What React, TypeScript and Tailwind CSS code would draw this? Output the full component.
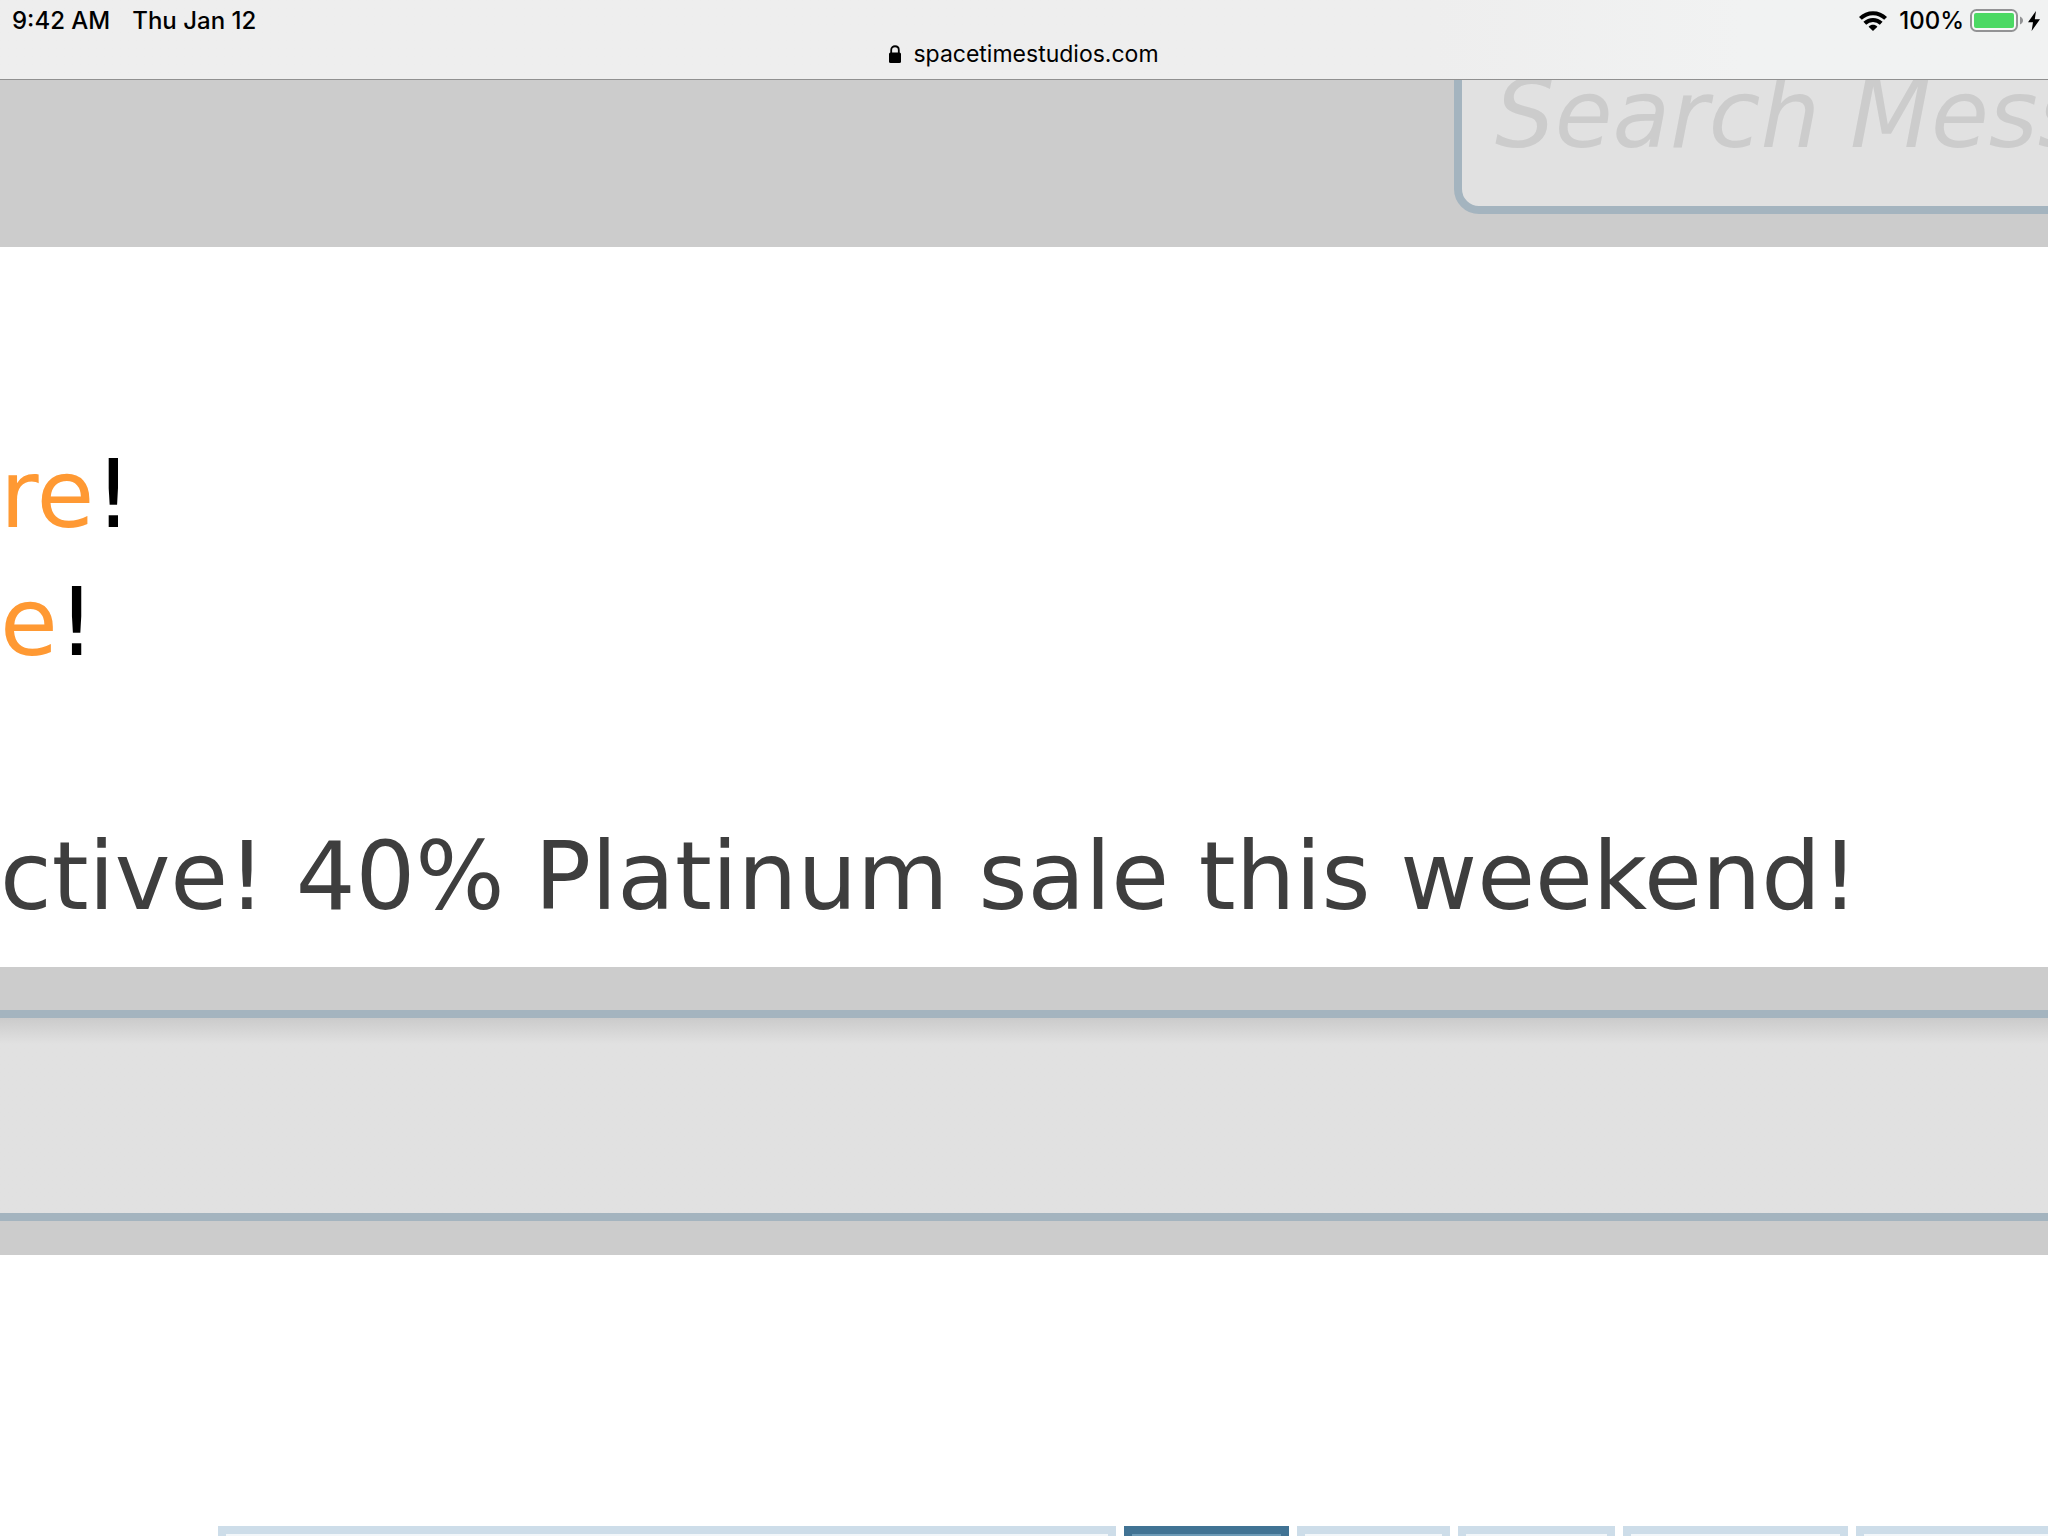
const cells = [
  { label: 'Page list', width: 'w-[898px]', active: false },
  { label: 'Page 1', width: 'w-[165px]', active: true },
  { label: 'Page 2', width: 'w-[153px]', active: false },
  { label: 'Page 3', width: 'w-[157px]', active: false },
  { label: 'Page 11', width: 'w-[225px]', active: false },
  { label: 'Next page', width: 'w-[225px]', active: false },
]

function WifiIcon() {
  return (
    <svg className="w-7 h-5" viewBox="0 0 28 20" fill="none" stroke="#000" strokeWidth={4}>
      <path d="M1.4 7.4C8.5 0.4 19.5 0.4 26.6 7.4" />
      <path d="M5.8 12.2C10.4 7.8 17.6 7.8 22.2 12.2" />
      <path d="M14 20L9.6 15.8C12.2 13.2 15.8 13.2 18.4 15.8Z" fill="#000" stroke="none" />
    </svg>
  )
}

function BatteryIcon() {
  return (
    <svg className="w-[54px] h-6" viewBox="0 0 54 24">
      <rect x="1" y="1" width="46" height="21" rx="5.5" fill="#f8f8f8" stroke="#939395" strokeWidth="2" />
      <rect x="4" y="4" width="40" height="15" rx="2" fill="#4cd964" />
      <path d="M50 7.5C54 9 54 14 50 15.5Z" fill="#939395" />
    </svg>
  )
}

function StatusBar() {
  return (
    <header className="relative z-10 h-20 border-b border-[#909090] bg-linear-to-r from-[#eeeeee] from-70% to-[#f1f2f2] to-85% font-['Inter',sans-serif] text-black">
      <div className="flex h-[42px] items-center justify-between pl-3 pr-2 text-2xl">
        <div className="flex gap-[22px] font-medium">
          <span>9:42 AM</span>
          <span>Thu Jan 12</span>
        </div>
        <div className="flex items-center">
          <WifiIcon />
          <span className="ml-3 mr-1.5 font-medium">100%</span>
          <BatteryIcon />
          <svg className="w-3 h-5 ml-1" viewBox="0 0 12 20">
            <path d="M8 0L0 11.2H5L3.6 20L12 8.2H6.8Z" fill="#000" />
          </svg>
        </div>
      </div>
      <div className="flex h-6 items-center justify-center gap-3 text-[23px]">
        <svg className="w-3 h-[18px]" viewBox="0 0 12 18">
          <path d="M2.2 9V5C2.2 0 9.8 0 9.8 5V9" fill="none" stroke="#000" strokeWidth="1.8" />
          <rect y="7.5" width="12" height="10.5" rx="1.5" fill="#000" />
        </svg>
        <span>spacetimestudios.com</span>
      </div>
    </header>
  )
}

export default function App() {
  return (
    <div className="h-screen overflow-hidden bg-white font-['DejaVu_Sans',sans-serif] text-[94px] leading-[128px]">
      <StatusBar />

      <form className="-mt-20 flex h-[247px] justify-end overflow-hidden bg-[#cccccc] pt-[2px]">
        <input
          type="text"
          aria-label="Search messages"
          placeholder="Search Messages"
          className="-mr-[200px] h-[212px] w-[794px] shrink-0 rounded-[25px] border-8 border-[#a4b4bf] bg-[#e1e1e1] pl-[33px] pt-3 italic outline-none placeholder:text-[#cccccc]"
        />
      </form>

      <main>
        <section className="h-[720px] pt-[184px]">
          <p className="text-black"><a href="#" className="text-[#ff9933]">re</a>!</p>
          <p className="text-black"><a href="#" className="text-[#ff9933]">e</a>!</p>
          <p className="mt-[126px] whitespace-nowrap text-[#3e3e3e]">
            ctive! 40% Platinum sale this weekend!
          </p>
        </section>

        <div className="h-72 bg-[#cccccc] pt-[43px]">
          <div className="h-[211px] border-y-8 border-[#a4b4bf] bg-linear-to-b from-[#cbcbcb] to-[#e1e1e1] to-[26px]" />
        </div>

        <nav aria-label="Pages" className="ml-[218px] mt-[271px] flex gap-2">
          {cells.map(c => (
            <button
              key={c.label}
              aria-label={c.label}
              className={`h-32 shrink-0 border-8 ${c.width} ${
                c.active ? 'border-[#417394] bg-[#6d9bb8]' : 'border-[#cddde9] bg-[#f3f7fa]'
              }`}
            />
          ))}
        </nav>
      </main>
    </div>
  )
}
